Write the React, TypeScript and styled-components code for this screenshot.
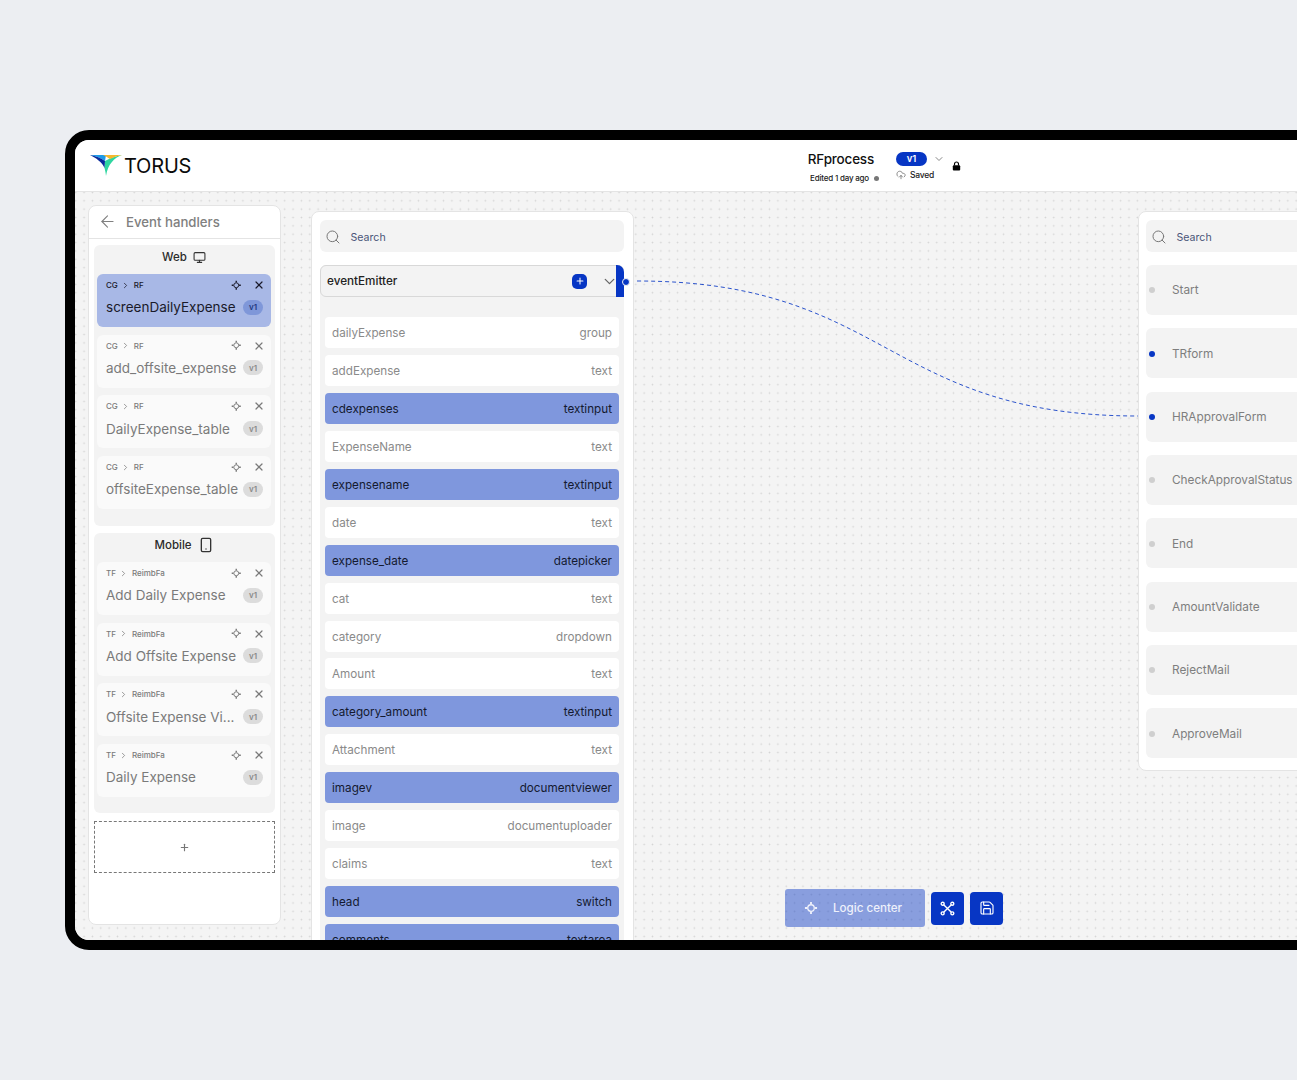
import React from "react";
import styled, { createGlobalStyle } from "styled-components";
import {
  ArrowLeft,
  ChevronDown,
  ChevronRight,
  CloudUpload,
  Monitor,
  Plus,
  Save,
  Search,
  Smartphone,
  X,
} from "lucide-react";

const BLUE = "#0736c4";

const webCards = [
  { a: "CG", b: "RF", name: "screenDailyExpense", active: true },
  { a: "CG", b: "RF", name: "add_offsite_expense" },
  { a: "CG", b: "RF", name: "DailyExpense_table" },
  { a: "CG", b: "RF", name: "offsiteExpense_table" },
];

const mobileCards = [
  { a: "TF", b: "ReimbFa", name: "Add Daily Expense" },
  { a: "TF", b: "ReimbFa", name: "Add Offsite Expense" },
  { a: "TF", b: "ReimbFa", name: "Offsite Expense Vi..." },
  { a: "TF", b: "ReimbFa", name: "Daily Expense" },
];

const fields = [
  ["dailyExpense", "group"],
  ["addExpense", "text"],
  ["cdexpenses", "textinput", true],
  ["ExpenseName", "text"],
  ["expensename", "textinput", true],
  ["date", "text"],
  ["expense_date", "datepicker", true],
  ["cat", "text"],
  ["category", "dropdown"],
  ["Amount", "text"],
  ["category_amount", "textinput", true],
  ["Attachment", "text"],
  ["imagev", "documentviewer", true],
  ["image", "documentuploader"],
  ["claims", "text"],
  ["head", "switch", true],
  ["comments", "textarea", true],
] as [string, string, boolean?][];

const targets = [
  { name: "Start" },
  { name: "TRform", linked: true },
  { name: "HRApprovalForm", linked: true },
  { name: "CheckApprovalStatus" },
  { name: "End" },
  { name: "AmountValidate" },
  { name: "RejectMail" },
  { name: "ApproveMail" },
];

const GlobalStyle = createGlobalStyle`
  html, body {
    margin: 0;
    height: 1080px;
    overflow: hidden;
    background: #eceef2;
    font-family: "Inter", "Liberation Sans", sans-serif;
  }
`;

const Page = styled.div`
  width: 1297px;
  height: 1080px;
  padding: 130px 0 0 65px;
  box-sizing: border-box;
  overflow: hidden;
`;

const Frame = styled.div`
  width: 1300px;
  height: 820px;
  box-sizing: border-box;
  border: 10px solid #000;
  border-radius: 24px;
  background: #fff;
  overflow: hidden;
  display: flex;
  flex-direction: column;
`;

const Header = styled.header`
  height: 51px;
  flex-shrink: 0;
  display: flex;
  align-items: center;
  background: #fff;
  border-bottom: 1px solid #e4e4e4;
  padding-left: 15px;
`;

const Brand = styled.div`
  width: 717px;
  display: flex;
  align-items: center;
  gap: 2px;
  font-size: 20px;
  letter-spacing: -0.2px;
  color: #0b0b0b;
  font-weight: 400;
`;

const ProcessInfo = styled.div`
  display: flex;
  flex-direction: column;
  align-items: flex-end;
  width: 72px;
  margin-right: 17px;
  padding-top: 3px;
`;

const ProcessName = styled.div`
  font-size: 13.5px;
  font-weight: 500;
  line-height: 17px;
  letter-spacing: -0.2px;
  color: #111;
  margin: 0 5px 5px 0;
`;

const EditedLine = styled.div`
  display: flex;
  align-items: center;
  gap: 5px;
  font-size: 8px;
  font-weight: 500;
  white-space: nowrap;
  letter-spacing: -0.2px;
  color: #222;
`;

const StatusDot = styled.span`
  width: 5px;
  height: 5px;
  border-radius: 50%;
  background: #777;
`;

const VersionInfo = styled.div`
  display: flex;
  flex-direction: column;
  gap: 4px;
  width: 56px;
`;

const VersionRow = styled.div`
  display: flex;
  align-items: center;
  gap: 6px;
  color: #888;
`;

const VersionPill = styled.span`
  width: 31px;
  height: 14px;
  border-radius: 8px;
  background: ${BLUE};
  color: #fff;
  font-size: 9.5px;
  font-weight: 600;
  display: flex;
  align-items: center;
  justify-content: center;
`;

const SavedRow = styled.div`
  display: flex;
  align-items: center;
  gap: 4px;
  font-size: 8.5px;
  font-weight: 500;
  letter-spacing: -0.2px;
  color: #222;
  svg {
    color: #777;
  }
`;

const Canvas = styled.main`
  position: relative;
  flex: 1;
  display: flex;
  align-items: flex-start;
  padding: 13px 0 0 13px;
  background-color: #f4f4f4;
  background-image: radial-gradient(#d4d4d4 0.8px, transparent 1px);
  background-size: 8.37px 8.37px;
  background-position: 4.9px 4.6px;
  overflow: hidden;
`;

const LeftPanel = styled.aside`
  width: 193px;
  height: 720px;
  flex-shrink: 0;
  box-sizing: border-box;
  background: #fff;
  border: 1px solid #e4e4e4;
  border-radius: 8px;
  padding-bottom: 5px;
`;

const PanelHeader = styled.div`
  height: 33px;
  box-sizing: border-box;
  display: flex;
  align-items: center;
  gap: 9px;
  padding: 0 0 1px 9px;
  border-bottom: 1px solid #e4e4e4;
  font-size: 13.2px;
  font-weight: 500;
  color: #808080;
  svg {
    color: #808080;
  }
`;

const Group = styled.section<{ $height: number }>`
  height: ${(p) => p.$height}px;
  margin: 6px 5px 0;
  box-sizing: border-box;
  background: #f3f3f3;
  border-radius: 6px;
  padding: 0 4px 0 3px;
  & + & {
    margin-top: 7px;
  }
`;

const GroupTitle = styled.div`
  height: 24px;
  margin-bottom: 5px;
  display: flex;
  align-items: center;
  justify-content: center;
  gap: 6px;
  font-size: 11.5px;
  font-weight: 500;
  color: #2a2a2a;
  svg {
    color: #333;
  }
`;

const CardList = styled.div`
  display: flex;
  flex-direction: column;
  gap: 7.7px;
`;

const Card = styled.div<{ $active?: boolean }>`
  height: 53px;
  box-sizing: border-box;
  padding: 5px 8px 0 9px;
  border-radius: 6px;
  background: ${(p) => (p.$active ? "#a8b8e6" : "#fafafa")};
  color: ${(p) => (p.$active ? "#1a1a2a" : "#7a7a7a")};
`;

const CardTop = styled.div`
  height: 12px;
  display: flex;
  align-items: center;
  margin-right: -2px;
  font-size: 8px;
  font-weight: 500;
`;

const Crumb = styled.span`
  display: flex;
  align-items: center;
  gap: 3.5px;
  flex: 1;
  svg {
    flex-shrink: 0;
  }
`;

const CardActions = styled.span`
  display: flex;
  align-items: center;
  gap: 12px;
  color: inherit;
`;

const CardBottom = styled.div`
  margin-top: 5.3px;
  height: 22px;
  display: flex;
  align-items: center;
  justify-content: space-between;
  font-size: 13.5px;
  white-space: nowrap;
`;

const Tag = styled.span<{ $active?: boolean }>`
  width: 20px;
  height: 15px;
  border-radius: 8px;
  flex-shrink: 0;
  background: ${(p) => (p.$active ? "#7f97d9" : "#dcdcdc")};
  color: ${(p) => (p.$active ? "#243a80" : "#8a8a8a")};
  font-size: 8px;
  font-weight: 600;
  display: flex;
  align-items: center;
  justify-content: center;
`;

const AddBox = styled.div`
  height: 52px;
  margin: 8px 5px 0;
  border: 1px dashed #777;
  box-sizing: border-box;
  display: flex;
  align-items: center;
  justify-content: center;
  color: #777;
`;

const MiddlePanel = styled.section`
  width: 323px;
  height: 740px;
  flex-shrink: 0;
  box-sizing: border-box;
  margin: 6px 0 0 30px;
  background: #fff;
  border: 1px solid #e4e4e4;
  border-radius: 8px;
  padding: 8px 9px 0 8px;
`;

const SearchBox = styled.div`
  height: 32px;
  box-sizing: border-box;
  display: flex;
  align-items: center;
  gap: 9.5px;
  padding: 2px 0 0 5px;
  background: #f3f3f3;
  border-radius: 6px;
  font-size: 10.6px;
  color: #4a5578;
  svg {
    color: #777;
  }
`;

const FieldGroup = styled.div`
  position: relative;
  margin-top: 13px;
  background: #f3f3f3;
  border-radius: 6px;
  height: 700px;
`;

const FieldHead = styled.div`
  height: 32px;
  box-sizing: border-box;
  display: flex;
  align-items: center;
  padding: 0 5px 0 6px;
  border: 1px solid #d8d8d8;
  border-radius: 6px;
  font-size: 11.7px;
  font-weight: 500;
  color: #222;
`;

const FieldName = styled.span`
  flex: 1;
`;

const AddField = styled.span`
  width: 15px;
  height: 15px;
  border-radius: 5px;
  background: ${BLUE};
  color: #fff;
  display: flex;
  align-items: center;
  justify-content: center;
  margin-right: 14px;
`;

const HeadChevron = styled.span`
  display: flex;
  color: #666;
`;

const Handle = styled.span`
  position: absolute;
  top: 0;
  right: 0;
  width: 8px;
  height: 32px;
  background: ${BLUE};
  border-radius: 0 7px 0 0;
`;

const HandleDot = styled.span`
  position: absolute;
  top: 13px;
  right: -6px;
  width: 6px;
  height: 6px;
  border-radius: 50%;
  background: ${BLUE};
  border: 1px solid #f4f4f4;
`;

const FieldList = styled.div`
  display: flex;
  flex-direction: column;
  gap: 6.95px;
  padding: 20px 5px 0;
`;

const Field = styled.div<{ $bound?: boolean }>`
  height: 31px;
  flex-shrink: 0;
  box-sizing: border-box;
  display: flex;
  align-items: center;
  justify-content: space-between;
  padding: 1px 7px 0;
  border-radius: 4px;
  font-size: 11.7px;
  background: ${(p) => (p.$bound ? "#7f97dd" : "#fff")};
  color: ${(p) => (p.$bound ? "#141a30" : "#8a8a8a")};
`;

const RightPanel = styled.section`
  width: 200px;
  height: 560px;
  flex-shrink: 0;
  box-sizing: border-box;
  margin: 6px 0 0 504px;
  background: #fff;
  border: 1px solid #e4e4e4;
  border-radius: 8px;
  padding: 8px 0 0 7px;
`;

const TargetList = styled.div`
  display: flex;
  flex-direction: column;
  gap: 13.35px;
  margin-top: 13px;
`;

const Target = styled.div`
  height: 50px;
  box-sizing: border-box;
  display: flex;
  align-items: center;
  gap: 17px;
  padding: 0.6px 0 0 3px;
  background: #f3f3f3;
  border-radius: 6px;
  font-size: 11.8px;
  color: #7e7e7e;
  white-space: nowrap;
`;

const TargetDot = styled.span<{ $linked?: boolean }>`
  width: 6px;
  height: 6px;
  flex-shrink: 0;
  border-radius: 50%;
  background: ${(p) => (p.$linked ? BLUE : "#cfcfcf")};
`;

const EdgeLayer = styled.svg`
  position: absolute;
  left: 0;
  top: 0;
  width: 100%;
  height: 100%;
  pointer-events: none;
`;

const Toolbar = styled.div`
  position: absolute;
  left: 710px;
  top: 697px;
  display: flex;
  align-items: center;
  gap: 6px;
`;

const LogicButton = styled.button`
  width: 140px;
  height: 38px;
  display: flex;
  align-items: center;
  gap: 15px;
  padding: 0 0 0 19px;
  border: none;
  border-radius: 3px;
  background: rgba(7, 54, 196, 0.45);
  color: #eef1fb;
  font-family: inherit;
  font-size: 11.6px;
  font-weight: 500;
`;

const IconButton = styled.button`
  width: 33px;
  height: 33px;
  padding: 0;
  border: none;
  border-radius: 4px;
  background: ${BLUE};
  color: #fff;
  display: flex;
  align-items: center;
  justify-content: center;
`;

const TorusLogo = () => (
  <svg width="32" height="21" viewBox="0 0 32 21">
    <path d="M0 0H16L15 6C11 3 6 1 0 0Z" fill="#1e9be8" />
    <path d="M32 0C24 3 18 9 16 21C15.6 17 15 15 14.5 13L15 6C20 3 26 1 32 0Z" fill="#2fd6a0" />
    <path d="M13 0H32C27 1 23 2.5 20 4C18 2.5 15 1 13 0Z" fill="#f5b82e" />
    <path d="M0 0C6 1 11 3 15 6L14.5 13C12 7 6 3 0 0Z" fill="#0a2a9c" />
  </svg>
);

const LockIcon = () => (
  <svg width="9" height="10" viewBox="0 0 9 10">
    <path d="M2.5 4.5V3a2 2 0 0 1 4 0v1.5" fill="none" stroke="#000" strokeWidth="1.2" />
    <rect x="0.8" y="4.2" width="7.4" height="5.3" rx="1" fill="#000" />
  </svg>
);

const LogicIcon = ({ size = 12 }: { size?: number }) => (
  <svg width={size} height={size} viewBox="0 0 12 12" fill="none" stroke="currentColor" strokeWidth="1.1">
    <circle cx="6" cy="6" r="2.8" />
    <path d="M6 .8v2M6 9.2v2M.8 6h2M9.2 6h2" strokeWidth="1.6" />
  </svg>
);

const NetworkIcon = () => (
  <svg width="15" height="15" viewBox="0 0 14 14" fill="none" stroke="currentColor" strokeWidth="1.3">
    <path d="M3.4 3.4l7.2 7.2M10.6 3.4l-7.2 7.2" />
    <circle cx="2.5" cy="2.5" r="1.4" />
    <circle cx="11.5" cy="2.5" r="1.4" />
    <circle cx="2.5" cy="11.5" r="1.4" />
    <circle cx="11.5" cy="11.5" r="1.4" />
  </svg>
);

type CardData = { a: string; b: string; name: string; active?: boolean };

const HandlerCard = ({ a, b, name, active }: CardData) => (
  <Card $active={active}>
    <CardTop>
      <Crumb>
        {a}
        <ChevronRight size={9} strokeWidth={2} />
        {b}
      </Crumb>
      <CardActions>
        <LogicIcon size={10.5} />
        <X size={12} strokeWidth={2.4} />
      </CardActions>
    </CardTop>
    <CardBottom>
      {name}
      <Tag $active={active}>v1</Tag>
    </CardBottom>
  </Card>
);

export default function App() {
  return (
    <Page>
      <GlobalStyle />
      <Frame>
        <Header>
          <Brand>
            <TorusLogo />
            TORUS
          </Brand>
          <ProcessInfo>
            <ProcessName>RFprocess</ProcessName>
            <EditedLine>
              Edited 1 day ago
              <StatusDot />
            </EditedLine>
          </ProcessInfo>
          <VersionInfo>
            <VersionRow>
              <VersionPill>v1</VersionPill>
              <ChevronDown size={12} />
            </VersionRow>
            <SavedRow>
              <CloudUpload size={10} />
              Saved
            </SavedRow>
          </VersionInfo>
          <LockIcon />
        </Header>
        <Canvas>
          <EdgeLayer>
            <path
              d="M562 89 C812 89 812 224 1063 224"
              fill="none"
              stroke={BLUE}
              strokeOpacity="0.85"
              strokeWidth="1"
              strokeDasharray="4 3"
            />
          </EdgeLayer>
          <LeftPanel>
            <PanelHeader>
              <ArrowLeft size={19} strokeWidth={1.4} />
              Event handlers
            </PanelHeader>
            <Group $height={281}>
              <GroupTitle>
                Web
                <Monitor size={13} />
              </GroupTitle>
              <CardList>
                {webCards.map((c) => (
                  <HandlerCard key={c.name} {...c} />
                ))}
              </CardList>
            </Group>
            <Group $height={280}>
              <GroupTitle>
                Mobile
                <Smartphone size={16} />
              </GroupTitle>
              <CardList>
                {mobileCards.map((c) => (
                  <HandlerCard key={c.name} {...c} />
                ))}
              </CardList>
            </Group>
            <AddBox>
              <Plus size={11} strokeWidth={2.5} />
            </AddBox>
          </LeftPanel>
          <MiddlePanel>
            <SearchBox>
              <Search size={16} strokeWidth={1.5} />
              Search
            </SearchBox>
            <FieldGroup>
              <FieldHead>
                <FieldName>eventEmitter</FieldName>
                <AddField>
                  <Plus size={10} strokeWidth={2.5} />
                </AddField>
                <HeadChevron>
                  <ChevronDown size={17} strokeWidth={1.8} />
                </HeadChevron>
              </FieldHead>
              <Handle>
                <HandleDot />
              </Handle>
              <FieldList>
                {fields.map(([name, type, bound]) => (
                  <Field key={name} $bound={bound}>
                    <span>{name}</span>
                    <span>{type}</span>
                  </Field>
                ))}
              </FieldList>
            </FieldGroup>
          </MiddlePanel>
          <RightPanel>
            <SearchBox>
              <Search size={16} strokeWidth={1.5} />
              Search
            </SearchBox>
            <TargetList>
              {targets.map((t) => (
                <Target key={t.name}>
                  <TargetDot $linked={t.linked} />
                  {t.name}
                </Target>
              ))}
            </TargetList>
          </RightPanel>
          <Toolbar>
            <LogicButton>
              <LogicIcon size={14} />
              Logic center
            </LogicButton>
            <IconButton>
              <NetworkIcon />
            </IconButton>
            <IconButton>
              <Save size={16} strokeWidth={1.7} />
            </IconButton>
          </Toolbar>
        </Canvas>
      </Frame>
    </Page>
  );
}
